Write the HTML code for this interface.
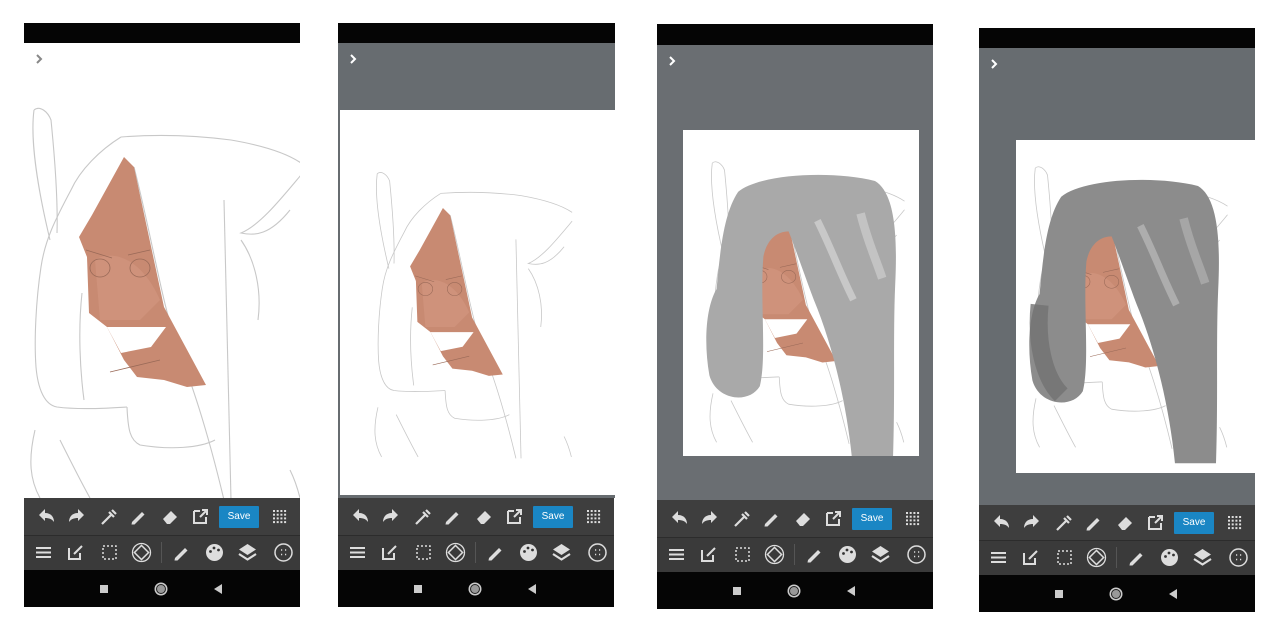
<!DOCTYPE html>
<html><head><meta charset="utf-8"><style>
html,body{margin:0;padding:0;background:#fff;width:1280px;height:640px;overflow:hidden;font-family:"Liberation Sans",sans-serif}
.abs{position:absolute}
.save{position:absolute;background:#1a86c4;color:#fff;font-size:10px;text-align:center;line-height:22px;border-radius:1px}
</style></head><body>
<svg class="abs" style="left:0;top:0" width="1280" height="640" viewBox="0 0 1280 640">
<defs>
<g id="art">
 <g fill="none" stroke="#c8c8c8" stroke-width="1.1">
  <path d="M34 110 C40 105 48 112 51 120 C55 160 58 200 57 233 M34 110 C30 140 38 190 50 240"/>
  <path d="M121 137 C100 150 80 170 71 190 C55 220 45 240 41 267 C36 300 34 340 36 367 C38 390 45 405 57 407 C80 410 110 408 127 407"/>
  <path d="M82 293 C78 330 80 370 84 400"/>
  <path d="M121 137 C160 134 200 136 231 140 C260 145 285 152 301 163"/>
  <path d="M224 200 C226 300 228 400 231 500"/>
  <path d="M134 167 C150 230 160 290 172 330 C190 380 205 420 224 500"/>
  <path d="M301 175 C280 200 260 225 241 233 C255 236 270 235 290 210"/>
  <path d="M241 240 C255 260 262 290 258 320"/>
  <path d="M127 407 C128 430 130 440 140 445 C170 450 200 448 215 440"/>
  <path d="M35 430 C28 460 30 480 40 498 M60 440 C70 460 80 480 90 498 M290 470 C295 480 298 490 300 498"/>
 </g>
 <path d="M124 157 L134 167 L164 307 L206 385 L187 387 L164 380 L137 377 L124 360 L107 327 L89 313 L87 257 L79 237 L92 215 Z" fill="#c88a72"/>
 <path d="M95 260 C110 250 140 255 160 300 L140 320 L100 320 Z" fill="#d49882" opacity=".6"/>
 <path d="M107 327 L166 327 L151 347 L121 353 Z" fill="#fff"/>
 <g fill="none" stroke="#9a6a58" stroke-width=".8">
  <ellipse cx="100" cy="268" rx="10" ry="9"/><ellipse cx="140" cy="268" rx="10" ry="9"/>
  <path d="M86 250 L112 258 M128 255 L150 250 M110 372 L160 360"/>
 </g>
</g>
<path id="hairp" d="M70 150 C100 125 200 120 260 135 C285 150 292 200 288 280 C285 350 288 430 285 520 L228 520 C220 440 200 360 175 300 C160 260 150 230 140 205 C125 205 110 215 105 240 C100 300 110 380 100 420 C85 445 40 440 30 405 C22 360 25 310 40 285 C45 230 50 180 70 150 Z"/>
<clipPath id="c1"><rect x="24" y="43" width="276" height="455"/></clipPath>
<clipPath id="c2"><rect x="340" y="110" width="275" height="385"/></clipPath>
<clipPath id="c3"><rect x="683" y="130" width="236" height="326"/></clipPath>
<clipPath id="c4"><rect x="1016" y="140" width="239" height="333"/></clipPath>
</defs>
<rect x="24" y="23" width="276" height="20" fill="#050505"/>
<g clip-path="url(#c1)"><use href="#art"/></g>
<rect x="338" y="23" width="277" height="20" fill="#050505"/>
<rect x="338" y="43" width="277" height="67" fill="#676c70"/>
<rect x="338" y="110" width="2" height="388" fill="#676c70"/>
<rect x="338" y="495" width="277" height="3" fill="#676c70"/>
<g clip-path="url(#c2)"><g transform="translate(352.4,93.4) scale(.73)"><use href="#art"/></g></g>
<rect x="657" y="24" width="276" height="21" fill="#050505"/>
<rect x="657" y="45" width="276" height="455" fill="#6a6e72"/>
<rect x="683" y="130" width="236" height="326" fill="#fff"/>
<g clip-path="url(#c3)"><g transform="translate(687.8,83.8) scale(.72)"><use href="#art"/>
 <use href="#hairp" fill="#a9a9a9"/>
 <path d="M180 190 C200 230 210 260 230 300" stroke="#d0d0d0" stroke-width="10" fill="none" opacity=".8"/>
 <path d="M240 180 C250 220 260 240 270 270" stroke="#cfcfcf" stroke-width="12" fill="none" opacity=".7"/>
</g></g>
<rect x="979" y="28" width="276" height="20" fill="#050505"/>
<rect x="979" y="48" width="276" height="457" fill="#676c70"/>
<rect x="1016" y="140" width="239" height="333" fill="#fff"/>
<g clip-path="url(#c4)"><g transform="translate(1010.8,88.8) scale(.72)"><use href="#art"/>
 <use href="#hairp" fill="#8c8c8c"/>
 <path d="M40 300 C35 350 45 400 70 425" stroke="#727272" stroke-width="25" fill="none" opacity=".8"/>
 <path d="M180 190 C200 230 210 260 230 300" stroke="#b5b5b5" stroke-width="10" fill="none" opacity=".8"/>
 <path d="M240 180 C250 220 260 240 270 270" stroke="#b0b0b0" stroke-width="12" fill="none" opacity=".7"/>
</g></g>
<g fill="none" stroke="#fff" stroke-width="2">
 <path d="M37 55 l4 4 -4 4" stroke="#888"/>
 <path d="M351 55 l4 4 -4 4"/>
 <path d="M670 57 l4 4 -4 4"/>
 <path d="M992 60 l4 4 -4 4"/>
</g>
</svg>

<div id="tb"></div>
<script>
const P=[[24,498,535,570,607],[338,498,535,570,607],[657,500,537,572,609],[979,505,540,575,612]];
const ic1=[
 '<path d="M3 9 L9 3 L9 7 C15 7 18 11 18 16 C16 13 13 12 9 12 L9 15 Z" fill="#ddd"/>',
 '<path d="M18 9 L12 3 L12 7 C6 7 3 11 3 16 C5 13 8 12 12 12 L12 15 Z" fill="#ddd"/>',
 '<path d="M4 18 L13 9 M11 6 L16 11 M14 4 L18 8" stroke="#ddd" stroke-width="2.2" fill="none"/>',
 '<path d="M4 16 L14 6 L16.5 8.5 L6.5 18.5 L3.5 18.5 Z" fill="#ddd"/>',
 '<path d="M3 13 L11 5 L17 11 L10 18 L7 18 Z" fill="#ddd"/>',
 '<path d="M4 5 L10 5 M4 5 L4 17 L16 17 L16 11 M10 11 L17 4 M12 4 L17 4 L17 9" stroke="#ddd" stroke-width="2" fill="none"/>'];
const ic2=[
 '<path d="M3 6 H18 M3 10.5 H18 M3 15 H18" stroke="#ddd" stroke-width="2"/>',
 '<path d="M4 6 V17 H15 V11 M9 12 L17 4" stroke="#ddd" stroke-width="2" fill="none"/>',
 '<rect x="4" y="4" width="13" height="13" stroke="#ddd" stroke-width="1.5" stroke-dasharray="2 2" fill="none"/>',
 '<circle cx="10.5" cy="10.5" r="9" stroke="#ddd" stroke-width="1.3" fill="none"/><rect x="5.5" y="5.5" width="10" height="10" transform="rotate(45 10.5 10.5)" stroke="#ddd" stroke-width="1.5" fill="none"/>',
 null,
 '<path d="M4 16 L14 6 L16.5 8.5 L6.5 18.5 L3.5 18.5 Z" fill="#ddd"/>',
 '<circle cx="10.5" cy="10.5" r="8.5" fill="#ddd"/><circle cx="6.5" cy="9.5" r="1.4" fill="#333"/><circle cx="10" cy="6" r="1.4" fill="#333"/><circle cx="14.5" cy="8" r="1.4" fill="#333"/>',
 '<path d="M10.5 2 L19 7.5 L10.5 13 L2 7.5 Z" fill="#ddd"/><path d="M2 12 L10.5 17.5 L19 12" stroke="#ddd" stroke-width="2.2" fill="none"/>',
 '<circle cx="10.5" cy="10.5" r="8.5" stroke="#ddd" stroke-width="1.5" fill="none"/><path d="M8 8h1.2M12 8h1.2M8 12.5h1.2M12 12.5h1.2" stroke="#ddd" stroke-width="1.5"/>'];
const x1=[12,42,74,104,136,166],x2=[9,41,75,107,null,147,180,213,249];
let h='';
for(const [l,a,b,c,d] of P){
 h+=`<div class="abs" style="left:${l}px;top:${a}px;width:276px;height:${b-a}px;background:#3e3e3e"></div>`;
 h+=`<div class="abs" style="left:${l}px;top:${b}px;width:276px;height:${c-b}px;background:#3a3a3a;border-top:1px solid #2c2c2c;box-sizing:border-box"></div>`;
 h+=`<div class="abs" style="left:${l}px;top:${c}px;width:276px;height:${d-c}px;background:#050505"></div>`;
 const y1=a+(b-a)/2-10.5,y2=b+(c-b)/2-10.5;
 ic1.forEach((s,i)=>h+=`<svg class="abs" style="left:${l+x1[i]}px;top:${y1}px" width="21" height="21">${s}</svg>`);
 h+=`<div class="save" style="left:${l+195}px;top:${a+(b-a)/2-11}px;width:40px;height:22px">Save</div>`;
 let g='';for(let r=0;r<4;r++)for(let q=0;q<4;q++)g+=`<rect x="${4+q*3.7}" y="${4+r*3.7}" width="2" height="2" fill="#ddd"/>`;
 h+=`<svg class="abs" style="left:${l+245}px;top:${y1}px" width="21" height="21">${g}</svg>`;
 ic2.forEach((s,i)=>{if(s)h+=`<svg class="abs" style="left:${l+x2[i]}px;top:${y2}px" width="21" height="21">${s}</svg>`;});
 h+=`<div class="abs" style="left:${l+137}px;top:${b+7}px;width:1px;height:${c-b-14}px;background:#555"></div>`;
 const ny=c+(d-c)/2;
 h+=`<svg class="abs" style="left:${l}px;top:${ny-8}px" width="276" height="16"><rect x="76" y="4" width="8" height="8" fill="#ccc"/><circle cx="137" cy="8" r="6.5" fill="#ccc"/><circle cx="137" cy="8" r="4.5" fill="#999" stroke="#222" stroke-width="1"/><path d="M198 3 L198 13 L190 8 Z" fill="#ccc"/></svg>`;
}
document.getElementById('tb').innerHTML=h;
</script>
</body></html>
